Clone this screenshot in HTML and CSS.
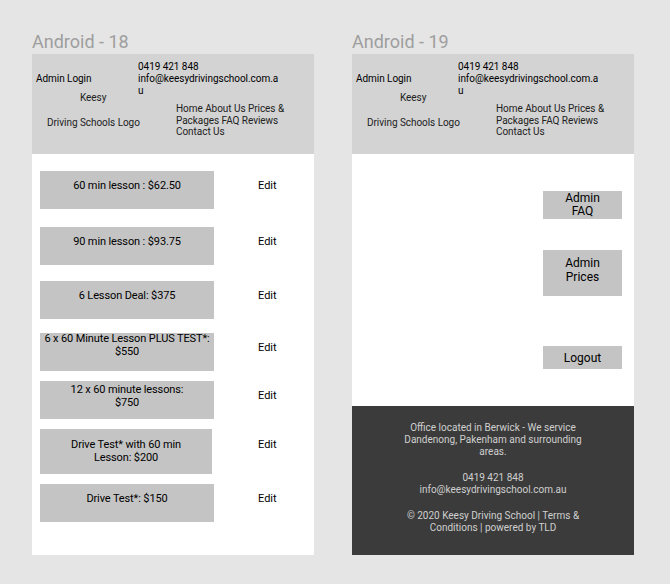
FILE: index.html
```html
<!DOCTYPE html>
<html lang="en">
<head>
<meta charset="utf-8">
<title>Keesy Driving School – Admin</title>
<link rel="stylesheet" href="styles.css">
</head>
<body>
<div class="canvas">
  <section class="board">
    <h2 class="board-title">Android - 18</h2>
    <div class="screen">
      <header class="site-header">
        <div class="hdr-left">
          <div class="admin-login">Admin Login</div>
          <div class="brand-keesy">Keesy</div>
          <div class="brand-logo">Driving Schools Logo</div>
        </div>
        <div class="hdr-right">
          <div class="contact">0419 421 848<br>info@keesydrivingschool.com.a<br>u</div>
          <nav class="nav">Home About Us Prices &amp; Packages FAQ Reviews Contact Us</nav>
        </div>
      </header>
      <main class="price-list">
        <div class="price-row gap-lg">
          <div class="price-box">60 min lesson : $62.50</div>
          <div class="edit">Edit</div>
        </div>
        <div class="price-row gap-md">
          <div class="price-box">90 min lesson : $93.75</div>
          <div class="edit">Edit</div>
        </div>
        <div class="price-row gap-sm">
          <div class="price-box">6 Lesson Deal: $375</div>
          <div class="edit">Edit</div>
        </div>
        <div class="price-row">
          <div class="price-box two-flush">6 x 60 Minute Lesson PLUS TEST*:<br>$550</div>
          <div class="edit">Edit</div>
        </div>
        <div class="price-row">
          <div class="price-box two-line">12 x 60 minute lessons:<br>$750</div>
          <div class="edit">Edit</div>
        </div>
        <div class="price-row">
          <div class="price-box tall">Drive Test* with 60 min<br>Lesson: $200</div>
          <div class="edit">Edit</div>
        </div>
        <div class="price-row">
          <div class="price-box">Drive Test*: $150</div>
          <div class="edit">Edit</div>
        </div>
      </main>
    </div>
  </section>

  <section class="board">
    <h2 class="board-title">Android - 19</h2>
    <div class="screen">
      <header class="site-header">
        <div class="hdr-left">
          <div class="admin-login">Admin Login</div>
          <div class="brand-keesy">Keesy</div>
          <div class="brand-logo">Driving Schools Logo</div>
        </div>
        <div class="hdr-right">
          <div class="contact">0419 421 848<br>info@keesydrivingschool.com.a<br>u</div>
          <nav class="nav">Home About Us Prices &amp; Packages FAQ Reviews Contact Us</nav>
        </div>
      </header>
      <main class="admin-menu">
        <div class="menu-btn btn-faq">Admin<br>FAQ</div>
        <div class="menu-btn btn-prices">Admin<br>Prices</div>
        <div class="menu-btn btn-logout">Logout</div>
      </main>
      <footer class="site-footer">
        <p>Office located in Berwick - We service Dandenong, Pakenham and surrounding areas.</p>
        <p>0419 421 848<br>info@keesydrivingschool.com.au</p>
        <p>© 2020 Keesy Driving School | Terms &amp; Conditions | powered by TLD</p>
      </footer>
    </div>
  </section>
</div>
</body>
</html>
```

FILE: styles.css
```css
* { box-sizing: border-box; }

body {
  margin: 0;
  background: #e5e5e5;
  font-family: Roboto, "Liberation Sans", sans-serif;
  color: #000;
}

.canvas {
  display: flex;
  gap: 38px;
  padding: 31px 0 0 32px;
}

.board {
  width: 282px;
}

.board-title {
  margin: 0 0 1px;
  height: 22px;
  font-family: Roboto, "Liberation Sans", sans-serif;
  font-weight: 400;
  font-size: 18px;
  line-height: 22px;
  color: #9e9e9e;
}

.screen {
  height: 501px;
  background: #fff;
  display: flex;
  flex-direction: column;
}

/* header */
.site-header {
  height: 100px;
  flex: none;
  background: #d3d3d3;
  display: flex;
  font-size: 10px;
  line-height: 11.72px;
  letter-spacing: -0.05px;
}

.hdr-left {
  width: 106px;
  flex: none;
  white-space: nowrap;
}

.admin-login { margin: 19px 0 0 4px; }
.brand-keesy { margin: 7px 0 0 48px; color: #222; }
.brand-logo { margin: 14px 0 0 15px; color: #222; }

.hdr-right {
  padding-top: 7.4px;
}

.nav {
  margin: 6.4px 0 0 38px;
  width: 115px;
  color: #222;
}

/* prices list */
.price-list {
  flex: 1;
  display: flex;
  flex-direction: column;
  gap: 10px;
  padding: 17px 0 0 8px;
}

.price-row {
  display: flex;
  align-items: flex-start;
}

.gap-lg { margin-bottom: 8px; }
.gap-md { margin-bottom: 6px; }
.gap-sm { margin-bottom: 4px; }

.price-box {
  width: 174px;
  height: 38px;
  padding-top: 9px;
  background: #c4c4c4;
  text-align: center;
  font-size: 11px;
  line-height: 12.9px;
  letter-spacing: -0.12px;
}

.price-box.two-flush { padding-top: 0; }
.price-box.two-line { padding-top: 3px; }
.price-box.tall { height: 45px; width: 172px; padding-top: 10px; }

.edit {
  margin-left: 44px;
  padding-top: 9px;
  font-size: 11px;
  line-height: 12.9px;
}
.tall + .edit { margin-left: 46px; padding-top: 10px; }

/* admin menu */
.admin-menu {
  flex: 1;
  display: flex;
  flex-direction: column;
  align-items: flex-end;
  padding: 37px 12px 0 0;
}

.menu-btn {
  width: 79px;
  background: #c4c4c4;
  text-align: center;
  font-size: 12px;
  line-height: 14px;
}

.btn-faq { height: 28px; padding-top: 1px; line-height: 13px; }
.btn-prices { height: 46px; margin-top: 31px; padding-top: 5.6px; }
.btn-logout { height: 23px; margin-top: 50px; padding-top: 4.6px; }

/* footer */
.site-footer {
  height: 149px;
  flex: none;
  background: #3b3b3b;
  color: #cfcfcf;
  font-size: 10px;
  line-height: 11.72px;
  text-align: center;
  padding-top: 16.4px;
}

.site-footer p {
  width: 184px;
  margin: 0 auto;
}

.site-footer p + p { margin-top: 14.6px; }
```
